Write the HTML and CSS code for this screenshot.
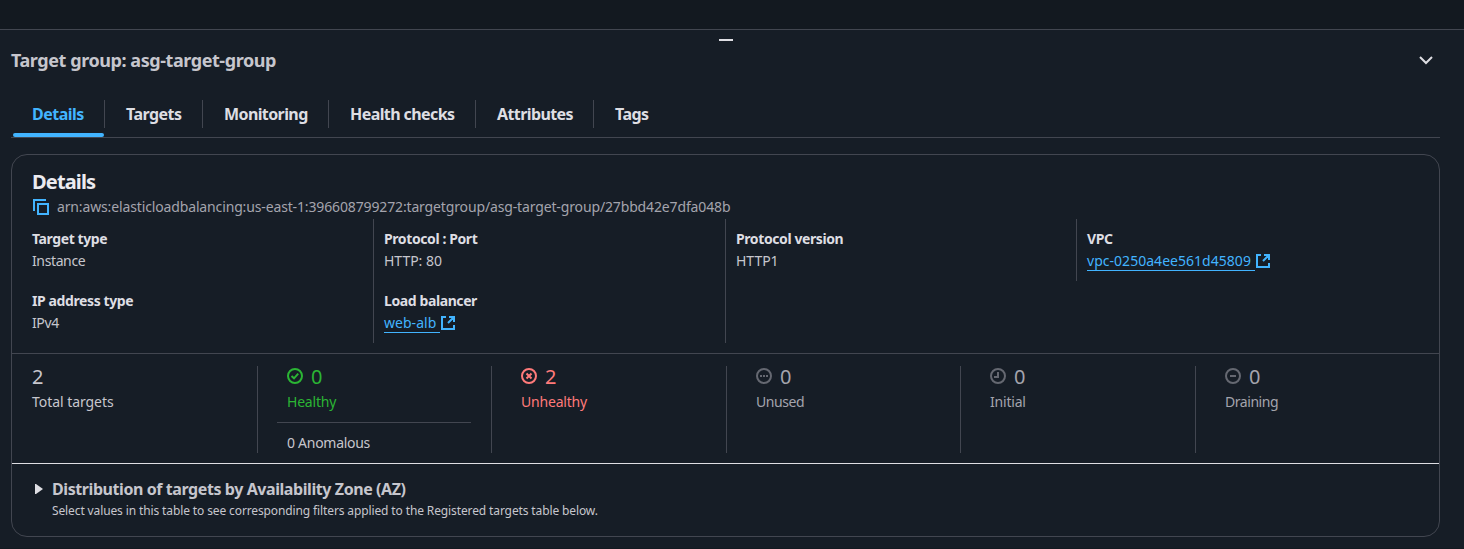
FILE: index.html
```html
<!DOCTYPE html>
<html lang="en">
<head>
<meta charset="utf-8">
<title>Target group</title>
<link rel="stylesheet" href="styles.css">
</head>
<body>
<section class="panel">
  <div class="handle"></div>
  <header class="panel-header">
    <h2 class="panel-title">Target group: asg-target-group</h2>
    <svg class="chevron" viewBox="0 0 16 16"><path d="M2 5l6 6 6-6"/></svg>
  </header>
  <nav class="tabs">
    <a class="tab active t1">Details</a>
    <a class="tab t2">Targets</a>
    <a class="tab t3">Monitoring</a>
    <a class="tab t4">Health checks</a>
    <a class="tab t5">Attributes</a>
    <a class="tab t6">Tags</a>
  </nav>
  <div class="card">
    <h1 class="card-title">Details</h1>
    <div class="arn">
      <svg class="copy" viewBox="0 0 16 16"><path d="M1 12V1h12M5 5h10v10H5z"/></svg>
      <span class="arn-text">arn:aws:elasticloadbalancing:us-east-1:396608799272:targetgroup/asg-target-group/27bbd42e7dfa048b</span>
    </div>
    <div class="grid">
      <div class="cell first"><b>Target type</b><span>Instance</span></div>
      <div class="cell"><b>Protocol : Port</b><span class="loose">HTTP: 80</span></div>
      <div class="cell"><b>Protocol version</b><span class="loose">HTTP1</span></div>
      <div class="cell"><b>VPC</b><div class="link-row"><a class="link">vpc-0250a4ee561d45809</a><svg class="ext" viewBox="0 0 14 14"><path d="M5 1H1v12h12V9M8 1h5v5M13 1L7 7"/></svg></div></div>
      <div class="cell first"><b>IP address type</b><span>IPv4</span></div>
      <div class="cell"><b>Load balancer</b><div class="link-row"><a class="link">web-alb</a><svg class="ext" viewBox="0 0 14 14"><path d="M5 1H1v12h12V9M8 1h5v5M13 1L7 7"/></svg></div></div>
      <div class="cell"></div>
    </div>
    <div class="stats">
      <div class="stat first"><div class="num">2</div><div class="label">Total targets</div></div>
      <div class="stat green"><div class="num"><svg class="status" viewBox="0 0 16 16"><circle cx="8" cy="8" r="7"/><path d="M4.500 8l2.500 2.300 4.200-4.600"/></svg>0</div><div class="label">Healthy</div><div class="anomalous">0 Anomalous</div></div>
      <div class="stat red"><div class="num"><svg class="status" viewBox="0 0 16 16"><circle cx="8" cy="8" r="7"/><path d="M5.500 5.500l5 5M10.500 5.500l-5 5"/></svg>2</div><div class="label">Unhealthy</div></div>
      <div class="stat gray"><div class="num"><svg class="status" viewBox="0 0 16 16"><circle cx="8" cy="8" r="7"/><path d="M4 8h2M7 8h2M10 8h2"/></svg>0</div><div class="label tight">Unused</div></div>
      <div class="stat gray"><div class="num"><svg class="status" viewBox="0 0 16 16"><circle cx="8" cy="8" r="7"/><path d="M8 4v5H4"/></svg>0</div><div class="label">Initial</div></div>
      <div class="stat gray"><div class="num"><svg class="status" viewBox="0 0 16 16"><circle cx="8" cy="8" r="7"/><path d="M5 8h6"/></svg>0</div><div class="label tight">Draining</div></div>
    </div>
    <div class="dist">
      <svg class="caret" viewBox="0 0 8 10"><path d="M0 0h1l7 5-7 5H0z"/></svg>
      <div>
        <h3 class="dist-title">Distribution of targets by Availability Zone (AZ)</h3>
        <p class="dist-sub">Select values in this table to see corresponding filters applied to the Registered targets table below.</p>
      </div>
    </div>
  </div>
</section>
</body>
</html>
```
FILE: styles.css
```css
* { box-sizing: border-box; }
body {
  margin: 0;
  padding-top: 29px;
  height: 549px;
  overflow: hidden;
  background: #131920;
  color: #c6c6cd;
  font: 14px/22px "Noto Sans", sans-serif;
}
h1, h2, h3, p { margin: 0; }
svg { display: block; flex: none; fill: none; stroke: currentColor; stroke-width: 2; }
.panel { height: 519px; padding: 10px 24px 0 11px; border-top: 1px solid #424650; background: #161d26; }
.handle { width: 14px; height: 2px; margin: -1px 0 0 708px; background: #dedee3; }
.panel-header { display: flex; align-items: center; height: 38px; padding-right: 6px; justify-content: space-between; }
.panel-title { font-size: 18px; line-height: 22px; letter-spacing: -0.43px; }
.chevron { width: 16px; height: 16px; color: #dedee3; }
.tabs { display: flex; height: 59px; padding: 21px 0 0 1px; border-bottom: 1px solid #424650; }
.tab { position: relative; height: 28px; padding-left: 21px; border-right: 1px solid #424650; color: #dedee3; font-size: 16px; font-weight: 700; line-height: 28px; letter-spacing: -0.52px; white-space: nowrap; }
.t1 { width: 93px; padding-left: 20px; }
.t2 { width: 98px; }
.t3 { width: 126px; letter-spacing: -0.6px; }
.t4 { width: 147px; letter-spacing: -0.58px; }
.t5 { width: 118px; letter-spacing: -0.6px; }
.t6 { border: 0; }
.active { color: #42b4ff; }
.active::after { content: ""; position: absolute; left: 1px; top: 33px; width: 91px; height: 4px; border-radius: 2px; background: #42b4ff; }
.card { height: 383px; margin-top: 16px; border: 1px solid #424650; border-radius: 16px; }
.card-title { padding: 14px 0 0 20px; color: #ebebf0; font-size: 20px; line-height: 26px; letter-spacing: -0.85px; }
.arn { display: flex; align-items: center; gap: 8px; height: 24px; padding-left: 21px; color: #a4a4ad; }
.copy { width: 16px; height: 16px; color: #42b4ff; }
.arn-text { letter-spacing: -0.14px; }
.grid { display: grid; grid-template-columns: 352px 352px 351px 1fr; margin-left: 9px; }
.cell { height: 62px; padding: 9px 0 9px 10px; border-left: 1px solid #424650; letter-spacing: -0.38px; }
.cell.first { border-color: transparent; }
.cell b, .cell span { display: block; }
.cell b { color: #dedee3; letter-spacing: -0.4px; }
.cell .loose { letter-spacing: -0.03px; }
.link-row { display: flex; align-items: center; height: 22px; }
.link { height: 20px; padding-right: 4px; border-bottom: 1px solid #42b4ff; line-height: 20px; color: #42b4ff; letter-spacing: 0.03px; }
.ext { width: 14px; height: 14px; margin-left: 1px; color: #42b4ff; }
.stats { display: grid; grid-template-columns: 235px 234px 235px 234px 235px 1fr; height: 110px; margin-top: 10px; padding: 12px 0 10px 10px; border-top: 1px solid #424650; }
.stat { height: 87px; padding-left: 29px; border-left: 1px solid #424650; letter-spacing: -0.2px; }
.stat.first { padding-left: 9px; border-color: transparent; letter-spacing: -0.05px; }
.num { display: flex; align-items: center; gap: 8px; height: 22px; font-size: 20px; line-height: 22px; }
.label { margin-top: 3px; }
.tight { letter-spacing: -0.45px; }
.status { width: 16px; height: 16px; margin-top: -2px; }
.green .num, .green .label { color: #2bb534; }
.red { color: #ff7a7a; }
.gray { color: #a4a4ad; }
.gray .status { color: #656871; }
.anomalous { width: 194px; margin: 9px 0 0 -10px; padding: 9px 0 0 10px; border-top: 1px solid #424650; letter-spacing: -0.28px; }
.dist { display: flex; height: 73px; padding: 15px 0 0 23px; border-top: 1px solid #dedee3; }
.caret { width: 8px; height: 10px; margin: 5px 9px 0 0; fill: #dedee3; stroke: none; }
.dist-title { font-size: 16px; line-height: 21px; letter-spacing: -0.42px; }
.dist-sub { margin-top: 1px; font-size: 12px; line-height: 20px; letter-spacing: -0.12px; }
```
